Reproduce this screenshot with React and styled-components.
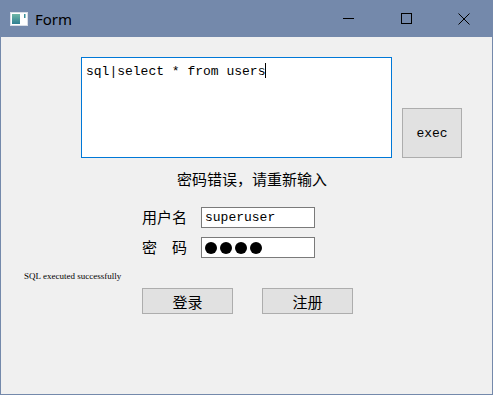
import React from 'react'
import styled, { createGlobalStyle } from 'styled-components'

const GlobalStyle = createGlobalStyle`
html, body {
    margin: 0;
    padding: 0;
    width: 493px;
    height: 395px;
    overflow: hidden;
    background: #f0f0f0;
}
`;

const Window = styled.div`
width: 493px;
height: 395px;
display: flex;
flex-direction: column;
box-sizing: border-box;
font-family: "Noto Sans CJK SC", "Noto Sans", sans-serif;
`;

const TitleBar = styled.div`
height: 37px;
flex-shrink: 0;
background-color: #7489ab;
display: flex;
align-items: center;
`;

const AppIcon = styled.svg`
margin-left: 10px;
width: 18px;
height: 14px;
`;

const Title = styled.span`
margin-left: 7px;
font-family: "Noto Sans", "Liberation Sans", sans-serif;
font-size: 15px;
color: #000;
flex: 1;
`;

const Caption = styled.div`
width: 58px;
height: 37px;
display: flex;
align-items: center;
justify-content: center;
`;

const Client = styled.div`
flex: 1;
background-color: #f0f0f0;
border: 1px solid #7489ab;
border-top: none;
`;

const TopRow = styled.div`
margin-top: 20px;
padding-left: 80px;
display: flex;
align-items: flex-end;
gap: 10px;
`;

const SqlBox = styled.div`
width: 311px;
height: 101px;
box-sizing: border-box;
border: 1px solid #0078d7;
background: #fff;
padding: 5px 4px;
font-family: "Liberation Mono", monospace;
font-size: 13px;
line-height: 16px;
color: #000;
white-space: pre;
`;

const Caret = styled.span`
display: inline-block;
width: 1px;
height: 15px;
background: #000;
vertical-align: -3px;
`;

const Button = styled.div`
width: ${p => p.$w}px;
height: ${p => p.$h}px;
box-sizing: border-box;
border: 1px solid #adadad;
background: #e1e1e1;
display: flex;
align-items: center;
justify-content: center;
font-family: ${p => p.$mono ? '"Liberation Mono", monospace' : '"Noto Sans CJK SC", sans-serif'};
font-size: ${p => p.$mono ? 13 : 15}px;
color: #000;
`;

const Message = styled.div`
margin-top: 11px;
padding-left: 176px;
font-size: 15px;
line-height: 20px;
color: #000;
`;

const FormGrid = styled.div`
margin-top: 18px;
margin-left: 141px;
display: grid;
grid-template-columns: 59px 114px;
grid-auto-rows: 21px;
row-gap: 9px;
`;

const Label = styled.div`
font-size: 15px;
line-height: 19px;
color: #000;
`;

const Field = styled.div`
box-sizing: border-box;
border: 1px solid #7a7a7a;
background: #fff;
padding: 0 3px;
display: flex;
align-items: center;
gap: 3px;
font-family: "Liberation Mono", monospace;
font-size: 13px;
color: #000;
`;

const Dot = styled.span`
width: 12px;
height: 12px;
border-radius: 50%;
background: #000;
`;

const Status = styled.div`
margin-top: 13px;
margin-left: 23px;
font-family: "Liberation Serif", serif;
font-size: 9px;
line-height: 11px;
color: #000;
`;

const ButtonRow = styled.div`
margin-top: 6px;
margin-left: 141px;
display: flex;
gap: 29px;
`;

const App = () => (
    <Window>
        <GlobalStyle />
        <TitleBar>
            <AppIcon viewBox="0 0 18 14">
                <defs>
                    <linearGradient id="g" x1="0" y1="0" x2="0" y2="1">
                        <stop offset="0" stopColor="#6fb7a6" />
                        <stop offset="1" stopColor="#2f7f92" />
                    </linearGradient>
                </defs>
                <rect x="0.5" y="0.5" width="17" height="13" fill="#fff" stroke="#d8dde6" />
                <rect x="2" y="2" width="8" height="10" fill="url(#g)" />
                <rect x="14" y="2" width="1.5" height="4" fill="#3a8f9a" />
            </AppIcon>
            <Title>Form</Title>
            <Caption>
                <svg width="11" height="11" viewBox="0 0 11 11"><line x1="0" y1="5.5" x2="11" y2="5.5" stroke="#000" /></svg>
            </Caption>
            <Caption>
                <svg width="11" height="11" viewBox="0 0 11 11"><rect x="0.5" y="0.5" width="10" height="10" fill="none" stroke="#000" /></svg>
            </Caption>
            <Caption>
                <svg width="12" height="12" viewBox="0 0 12 12"><path d="M0.5 0.5 L11.5 11.5 M11.5 0.5 L0.5 11.5" stroke="#000" /></svg>
            </Caption>
        </TitleBar>
        <Client>
            <TopRow>
                <SqlBox>sql|select * from users<Caret /></SqlBox>
                <Button $w={60} $h={50} $mono>exec</Button>
            </TopRow>
            <Message>密码错误，请重新输入</Message>
            <FormGrid>
                <Label>用户名</Label>
                <Field>superuser</Field>
                <Label>密　码</Label>
                <Field>
                    <Dot /><Dot /><Dot /><Dot />
                </Field>
            </FormGrid>
            <Status>SQL executed successfully</Status>
            <ButtonRow>
                <Button $w={91} $h={26}>登录</Button>
                <Button $w={91} $h={26}>注册</Button>
            </ButtonRow>
        </Client>
    </Window>
)

export default App
